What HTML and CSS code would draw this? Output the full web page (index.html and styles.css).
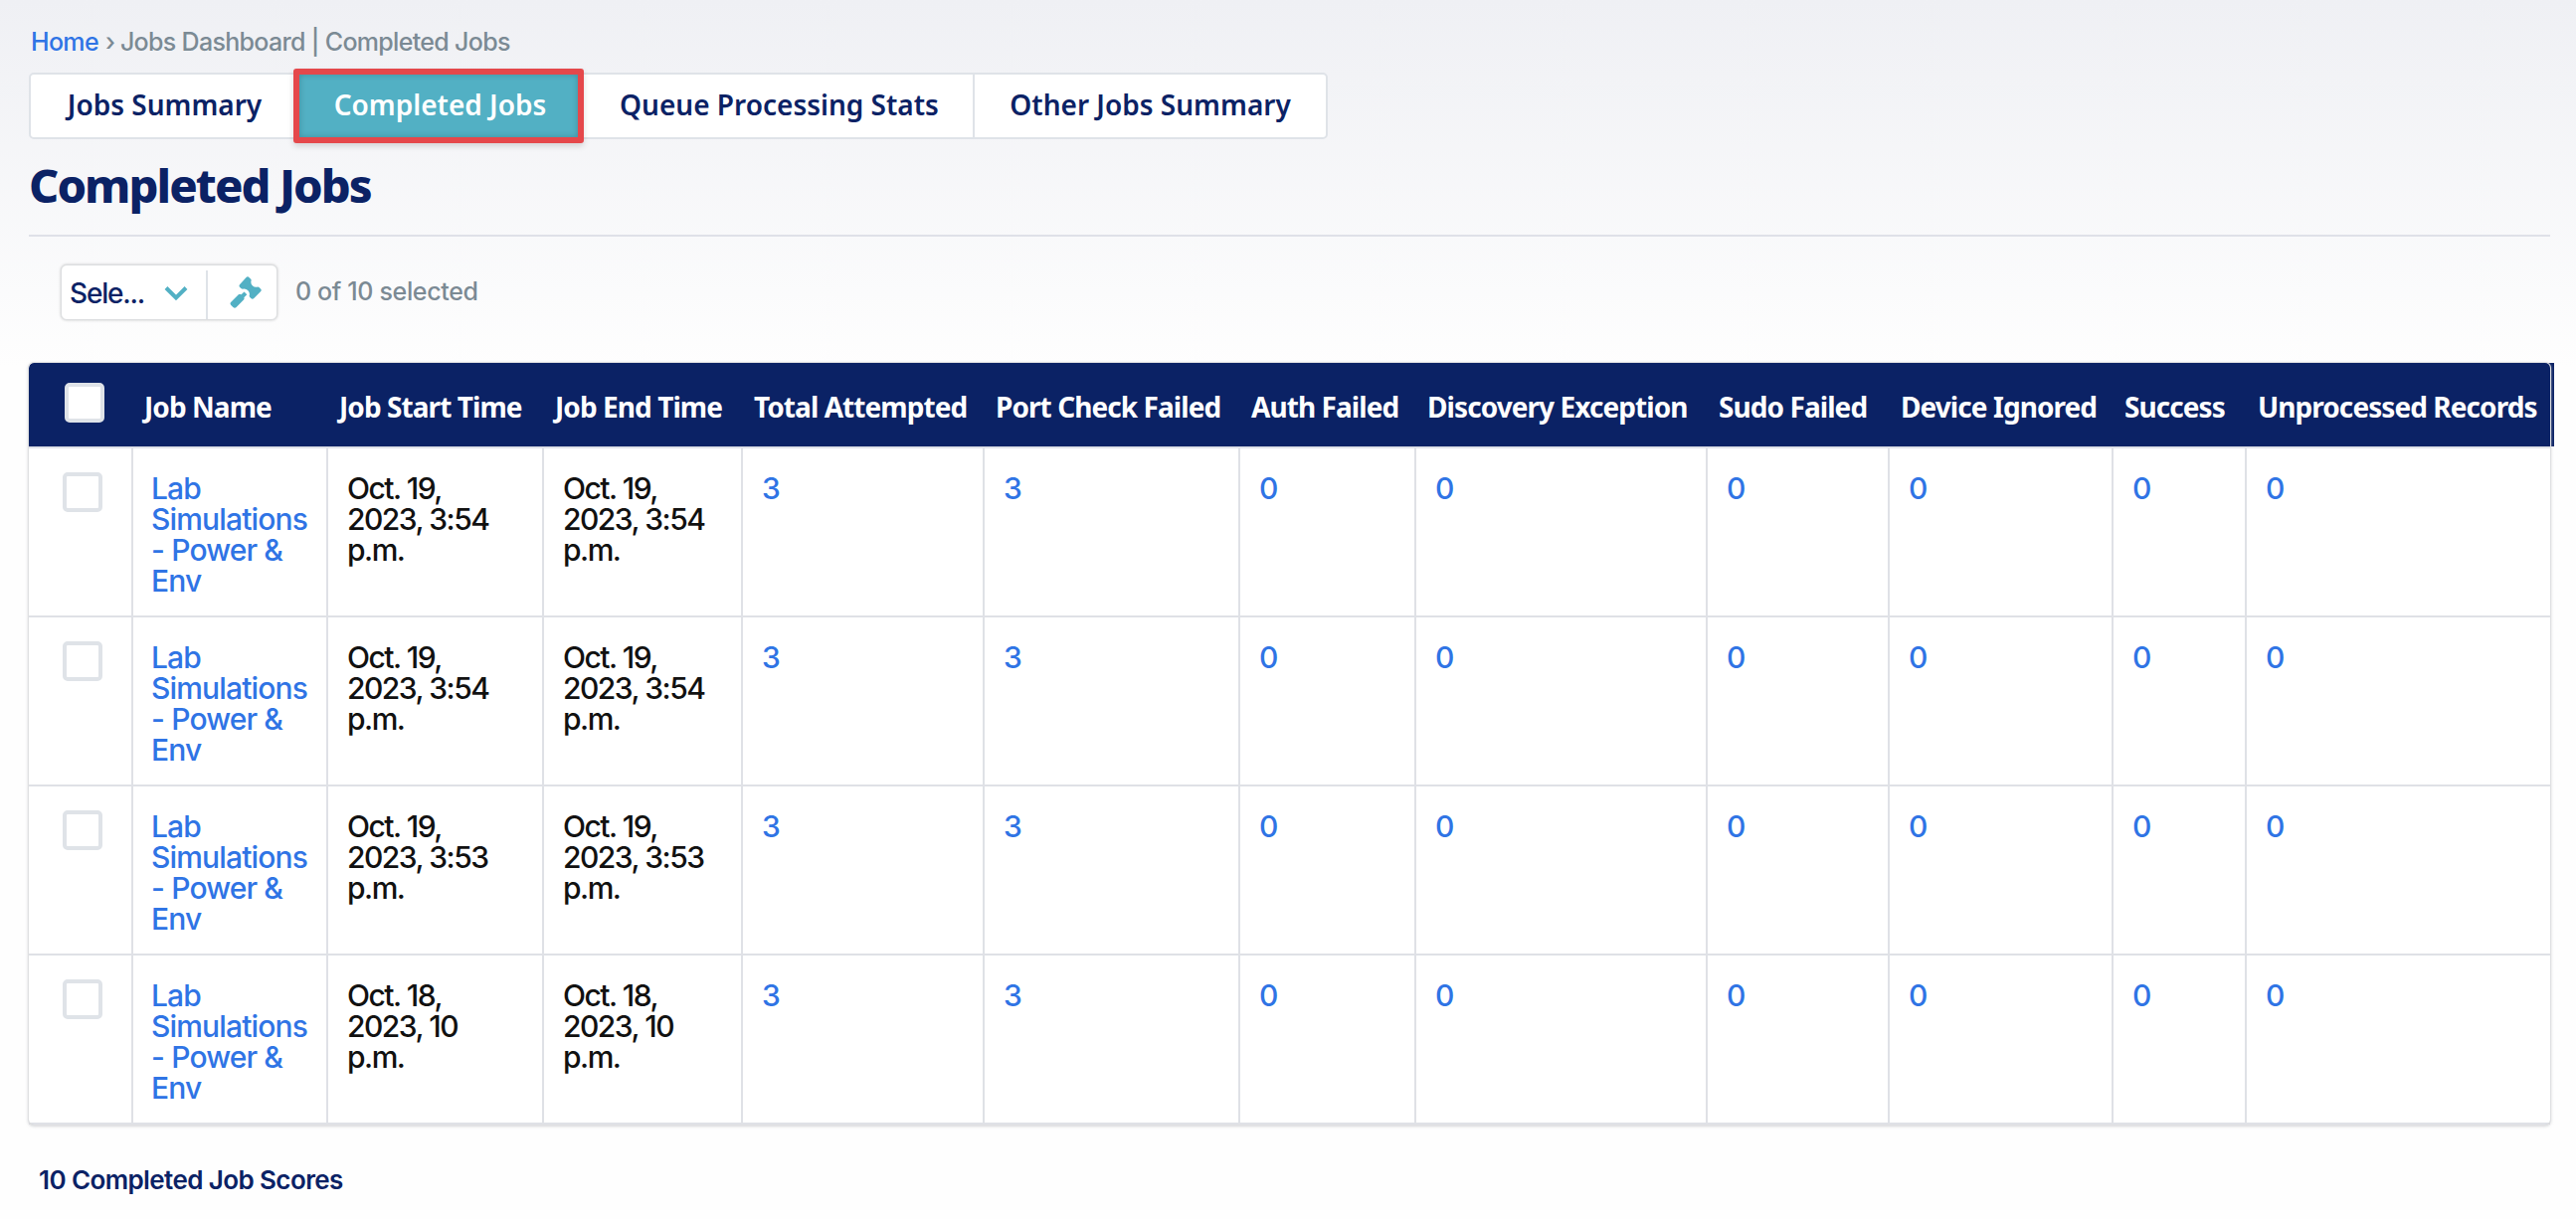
FILE: index.html
```html
<!DOCTYPE html>
<html lang="en">
<head>
<meta charset="utf-8">
<title>Completed Jobs</title>
<link rel="stylesheet" href="styles.css">
</head>
<body>
<nav class="breadcrumb"><a href="#">Home</a><span class="sep">›</span><span>Jobs Dashboard | Completed Jobs</span></nav>
<div class="tabs">
  <a class="tab tab-first">Jobs Summary</a>
  <a class="tab tab-active">Completed Jobs</a>
  <a class="tab tab-queue">Queue Processing Stats</a>
  <a class="tab">Other Jobs Summary</a>
</div>
<h1>Completed Jobs</h1>
<div class="actions">
  <div class="picker">
    <div class="select"><span>Sele...</span>
      <svg width="24" height="16" viewBox="0 0 24 16"><path d="M2 2.500L12 12.500L22 2.500" fill="none" stroke="#52b0c4" stroke-width="4"/></svg>
    </div>
    <button class="run" aria-label="Run">
      <svg width="32" height="32" viewBox="0 0 32 32" fill="#52b0c4"><path d="M16.300 1.200Q18-.5 19.700 1.200L21.200 2.700Q22 3.700 21.400 4.800Q21 7.500 22.800 9.300Q24.600 11 27.200 10.700Q28.800 10.300 29.800 11.200L31 12.400Q32.500 13.800 31 15.300L24.300 22Q22.800 23.400 21.300 22L20.300 21Q19.200 19.800 19.900 18.600Q20.200 16.200 18.400 14.300Q16.600 12.400 14 12.600Q12.400 13.100 11.300 12L10.200 10.900Q8.700 9.400 10.200 7.900Z"/><path d="M14.500 15.500L17.300 18.300L14.300 21.300Q15 22.500 14 23.500L6.600 31Q5 32.500 3.400 31L1.300 28.900Q-.3 27.300 1.300 25.700L8.800 18.300Q10 17.300 11.500 18.300Z"/></svg>
    </button>
  </div>
  <span class="count">0 of 10 selected</span>
</div>
<div class="results">
<table>
  <colgroup><col class="c-check"><col class="c-name"><col class="c-start"><col class="c-end"><col class="c-total"><col class="c-port"><col class="c-auth"><col class="c-disc"><col class="c-sudo"><col class="c-ign"><col class="c-succ"><col class="c-unp"></colgroup>
  <thead><tr><th><span class="box"></span></th><th>Job Name</th><th>Job Start Time</th><th>Job End Time</th><th>Total Attempted</th><th>Port Check Failed</th><th>Auth Failed</th><th>Discovery Exception</th><th>Sudo Failed</th><th>Device Ignored</th><th>Success</th><th>Unprocessed Records</th></tr></thead>
  <tbody>
  <tr><td><span class="box"></span></td><td class="name"><a>Lab<br>Simulations<br>- Power &amp;<br>Env</a></td><td class="date">Oct. 19,<br>2023, 3:54<br>p.m.</td><td class="date">Oct. 19,<br>2023, 3:54<br>p.m.</td><td><a>3</a></td><td><a>3</a></td><td><a>0</a></td><td><a>0</a></td><td><a>0</a></td><td><a>0</a></td><td><a>0</a></td><td><a>0</a></td></tr>
  <tr><td><span class="box"></span></td><td class="name"><a>Lab<br>Simulations<br>- Power &amp;<br>Env</a></td><td class="date">Oct. 19,<br>2023, 3:54<br>p.m.</td><td class="date">Oct. 19,<br>2023, 3:54<br>p.m.</td><td><a>3</a></td><td><a>3</a></td><td><a>0</a></td><td><a>0</a></td><td><a>0</a></td><td><a>0</a></td><td><a>0</a></td><td><a>0</a></td></tr>
  <tr><td><span class="box"></span></td><td class="name"><a>Lab<br>Simulations<br>- Power &amp;<br>Env</a></td><td class="date">Oct. 19,<br>2023, 3:53<br>p.m.</td><td class="date">Oct. 19,<br>2023, 3:53<br>p.m.</td><td><a>3</a></td><td><a>3</a></td><td><a>0</a></td><td><a>0</a></td><td><a>0</a></td><td><a>0</a></td><td><a>0</a></td><td><a>0</a></td></tr>
  <tr><td><span class="box"></span></td><td class="name"><a>Lab<br>Simulations<br>- Power &amp;<br>Env</a></td><td class="date">Oct. 18,<br>2023, 10<br>p.m.</td><td class="date">Oct. 18,<br>2023, 10<br>p.m.</td><td><a>3</a></td><td><a>3</a></td><td><a>0</a></td><td><a>0</a></td><td><a>0</a></td><td><a>0</a></td><td><a>0</a></td><td><a>0</a></td></tr>
  </tbody>
</table>
</div>
<p class="summary">10 Completed Job Scores</p>
</body>
</html>
```

FILE: styles.css
```css
* { box-sizing: border-box; }
html { height: 100%; }
body {
  margin: 0;
  height: 1226px;
  padding: 27px 26px 0 29px;
  overflow: hidden;
  background: #fefefe linear-gradient(#eff0f4, #fefefe 370px) no-repeat;
  font-family: Inter, "Liberation Sans", sans-serif;
  font-weight: 450;
  color: #111;
}
a { color: #2f74e5; text-decoration: none; }

.breadcrumb {
  display: flex;
  height: 30px;
  line-height: 30px;
  padding-left: 2px;
  font-size: 25px;
  letter-spacing: -0.68px;
  color: #7b8a94;
}
.sep { width: 22px; padding-left: 7px; }

.tabs {
  display: flex;
  width: 1306px;
  height: 67px;
  margin-top: 16px;
  border: 2px solid #dfe3e8;
  border-radius: 5px;
  background: #fff;
}
.tab {
  flex: 1 0 auto;
  font: 600 28px/61px "Noto Sans", sans-serif;
  text-align: center;
  color: #0b2265;
  border-left: 2px solid #dfe3e8;
}
.tab-first { flex: 0 0 264px; border-left: 0; padding-left: 5px; }
.tab-active {
  flex: 0 0 292px;
  position: relative;
  height: 75px;
  margin: -6px 0;
  padding-left: 3px;
  border: 6px solid #e5484b;
  border-radius: 3px;
  background: #52b0c4;
  box-shadow: 0 3px 6px rgba(0, 0, 0, .14), inset 0 0 6px rgba(0, 0, 0, .2);
  color: #fff;
}
.tab-queue { flex: 0 0 391px; border-left: 0; padding-left: 2px; }

h1 {
  width: 2535px;
  height: 98px;
  margin: 0;
  border-bottom: 2px solid #dfe1e8;
  font: 800 47px/93px "Noto Sans", sans-serif;
  letter-spacing: -1.9px;
  color: #0b2265;
}

.actions { display: flex; align-items: center; height: 56px; margin: 28px 0 0 32px; }
.picker {
  display: flex;
  width: 218px;
  height: 56px;
  border: 1px solid #dcdee0;
  border-radius: 6px;
  background: #fff;
  box-shadow: 0 0 3px rgba(0, 0, 0, .22);
}
.select {
  display: flex;
  align-items: center;
  justify-content: space-between;
  width: 145px;
  padding: 2px 18px 0 8px;
  font-size: 28px;
  letter-spacing: -1.2px;
  color: #0b2265;
}
.run {
  display: grid;
  place-items: center;
  width: 71px;
  margin-top: 5px;
  padding: 0 0 6px 6px;
  border: 0;
  border-left: 2px solid #dfe3e8;
  background: none;
}
.count { margin-left: 18px; padding-bottom: 3px; font-size: 25px; letter-spacing: -0.35px; color: #7b8a94; }

.results { position: relative; width: 2535px; margin-top: 43px; }
.results::after {
  content: "";
  position: absolute;
  inset: 0;
  border-radius: 5px;
  box-shadow: 0 0 0 1px #dfe0e2, 0 1px 3px 1px rgba(200, 202, 205, .75);
  pointer-events: none;
}
table { width: 2535px; table-layout: fixed; border-collapse: separate; border-spacing: 0; background: #fff; border-radius: 5px; }
.c-check { width: 105px; }
.c-name { width: 196px; }
.c-start { width: 217px; }
.c-end { width: 200px; }
.c-total { width: 243px; }
.c-port { width: 257px; }
.c-auth { width: 177px; }
.c-disc { width: 293px; }
.c-sudo { width: 183px; }
.c-ign { width: 225px; }
.c-succ { width: 134px; }
.c-unp { width: 305px; }
th {
  height: 86px;
  padding: 4px 0 0 11px;
  border-bottom: 2px solid #dfe1e8;
  background: #0b2265;
  font: 700 28px/40px "Noto Sans", sans-serif;
  letter-spacing: -0.93px;
  text-align: left;
  white-space: nowrap;
  color: #fff;
}
th:first-child { padding: 0 0 4px 36px; border-top-left-radius: 5px; }
th:last-child { box-shadow: 4px -2px 0 #0b2265; clip-path: inset(0 -4px 0 0); }
td {
  height: 170px;
  padding: 25px 0 0 19px;
  border-right: 2px solid #dfe1e6;
  border-bottom: 2px solid #dfe1e6;
  vertical-align: top;
  font-size: 30px;
  line-height: 31px;
  white-space: nowrap;
}
td:first-child { padding: 24px 0 0 34px; }
td:last-child { border-right: 0; }
td.name { padding-left: 18px; letter-spacing: -0.85px; }
td.date { letter-spacing: -1.5px; }
.box { display: block; width: 40px; height: 40px; border: 4px solid #dfe3e8; border-radius: 5px; background: #fff; }

.summary { margin: 40px 0 0 10px; font-size: 26px; font-weight: 600; line-height: 32px; letter-spacing: -0.6px; color: #0b2265; }
```
